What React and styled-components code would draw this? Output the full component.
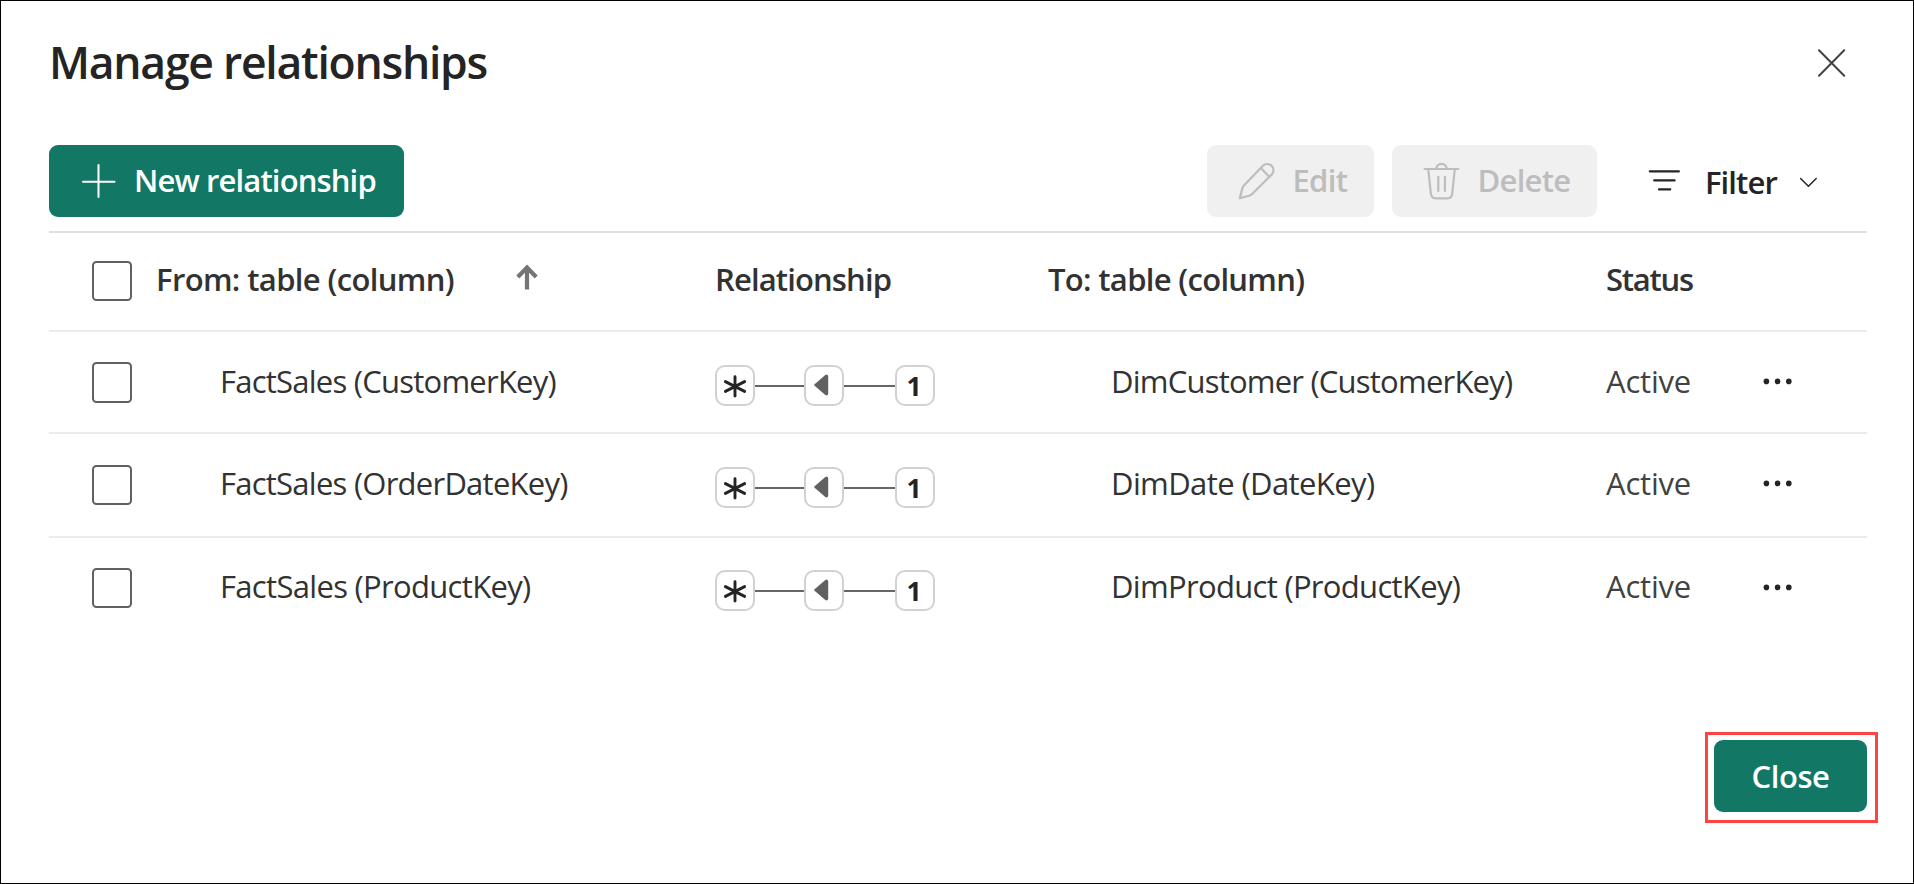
import React from "react";
import styled, { createGlobalStyle } from "styled-components";

const GlobalStyle = createGlobalStyle`
  *, *::before, *::after { box-sizing: border-box; }
  body {
    margin: 0;
    background: #fff;
    font-family: "Segoe UI", "Open Sans", "Noto Sans", sans-serif;
    font-size: 31px;
    color: #323232;
  }
`;

const Dialog = styled.main`
  display: flex;
  flex-direction: column;
  width: 1914px;
  height: 884px;
  padding: 31px 46px 0 48px;
  border: 1px solid #000;
  background: #fff;
`;

const TitleBar = styled.header`
  display: flex;
  justify-content: space-between;
  height: 113px;
  padding-right: 21px;
`;

const Title = styled.h1`
  margin: 0;
  font-size: 44.5px;
  line-height: 60px;
  font-weight: 600;
  letter-spacing: -1.25px;
  color: #242424;
`;

const IconButton = styled.button`
  display: flex;
  align-self: flex-start;
  margin-top: 17px;
  padding: 0;
  border: 0;
  background: none;
  color: #424242;
`;

const Toolbar = styled.div`
  display: flex;
  height: 88px;
  padding-bottom: 14px;
  border-bottom: 2px solid #e0e0e0;
`;

const Actions = styled.div`
  display: flex;
  gap: 18px;
  margin-left: auto;
`;

const variants = {
  primary: { bg: "#127865", fg: "#ffffff" },
  disabled: { bg: "#f0f0f0", fg: "#bdbdbd" },
  subtle: { bg: "transparent", fg: "#242424" },
};

const Button = styled.button`
  display: flex;
  align-items: center;
  flex: none;
  justify-content: ${(p) => (p.$centered ? "center" : "flex-start")};
  width: ${(p) => p.$width}px;
  height: 72px;
  padding: 0 0 0 ${(p) => p.$inset ?? 0}px;
  gap: ${(p) => p.$gap ?? 0}px;
  border: 0;
  border-radius: 9px;
  background: ${(p) => variants[p.$variant].bg};
  color: ${(p) => variants[p.$variant].fg};
  font: inherit;
  font-weight: 600;
`;

const Label = styled.span`
  padding-bottom: ${(p) => p.$lift ?? 2}px;
  white-space: nowrap;
  letter-spacing: ${(p) => p.$spacing}px;
`;

const FilterButton = styled(Button)`
  margin-left: 25px;

  & > ${Label} {
    padding-top: 2px;
  }

  & > svg:last-child {
    margin: 2px 0 0 6px;
  }
`;

const Icon = styled.svg`
  display: block;
  flex: none;
  fill: none;
  stroke: currentColor;
  stroke-linecap: round;
  stroke-linejoin: round;
`;

const Row = styled.div`
  display: grid;
  grid-template-columns: 107px 559px 333px 558px 157px 1fr;
  align-items: start;
  height: ${(p) => p.$height}px;
  border-bottom: ${(p) => (p.$last ? "0" : "2px solid #ebebeb")};
`;

const SelectCell = styled.div`
  padding: ${(p) => p.$top}px 0 0 43px;
`;

const Checkbox = styled.span.attrs({ role: "checkbox", "aria-checked": false })`
  display: block;
  width: 40px;
  height: ${(p) => p.$height ?? 40}px;
  border: 2px solid #616161;
  border-radius: 4.5px;
`;

const HeaderCell = styled.div`
  display: flex;
  padding-top: 26px;
  line-height: 40px;
  font-weight: 600;
  letter-spacing: ${(p) => p.$spacing}px;
  white-space: nowrap;
`;

const SortIcon = styled(Icon)`
  margin: 3px 0 0 61px;
  color: #757575;
  stroke-linecap: butt;
  stroke-linejoin: miter;
`;

const Cell = styled.div`
  padding: ${(p) => p.$top}px 0 0 ${(p) => p.$indent ?? 0}px;
  line-height: 40px;
  letter-spacing: ${(p) => p.$spacing ?? 0}px;
  white-space: nowrap;
  color: ${(p) => (p.$muted ? "#424242" : "#323232")};
`;

const Cardinality = styled.div`
  display: flex;
  align-items: center;
  padding-top: ${(p) => p.$top}px;
`;

const Badge = styled.span`
  display: flex;
  align-items: center;
  justify-content: center;
  width: 40px;
  height: 41px;
  margin-top: ${(p) => (p.$raised ? -1 : 0)}px;
  padding: 0 ${(p) => p.$shift ?? 0}px 0 0;
  border: 2px solid #d1d1d1;
  border-radius: 10px;
  color: #242424;
  font-size: 26.5px;
  font-weight: 700;
  line-height: 36px;
`;

const Link = styled.span`
  width: ${(p) => p.$width}px;
  height: 2px;
  background: #666;
`;

const MenuCell = styled.div`
  display: flex;
  padding-top: ${(p) => p.$top}px;
  color: #242424;
`;

const Footer = styled.footer`
  display: flex;
  justify-content: flex-end;
  margin: 94px -11px 0 0;
`;

const Highlight = styled.div`
  height: 91px;
  padding: 5px 8px 0 6px;
  border: 3px solid #ff4343;
`;

const PlusIcon = () => (
  <Icon width="35" height="36" viewBox="0 0 35 36" strokeWidth="2">
    <path d="M2 18.7H33.5M17.5 2V34" />
  </Icon>
);

const PencilIcon = () => (
  <Icon width="60" height="60" viewBox="0 1 60 60" strokeWidth="2.2">
    <path d="M14.8 48.2L17.3 38.6Q17.8 36.6 19.2 35.2L37.9 15.8A6.2 6.2 0 0 1 46.7 24.6L27.4 43.7Q25.9 45.2 24 45.8ZM35.8 18L44.4 27" />
  </Icon>
);

const TrashIcon = () => (
  <Icon width="60" height="60" viewBox="0 1 60 60" strokeWidth="2.2">
    <path d="M14.6 19H48.4M26.4 19A5.1 5.1 0 0 1 36.6 19M18.2 19L20.9 43.8Q21.5 48.3 25.8 48.3H37.4Q41.6 48.3 42.2 43.8L44.8 19M28.3 26.8V41M34.9 26.8V41" />
  </Icon>
);

const FilterIcon = () => (
  <Icon width="50" height="60" viewBox="0 1 50 60" strokeWidth="2.2">
    <path d="M9.8 21.3H38.9M14.2 30.4H34.6M19 39.4H30.2" />
  </Icon>
);

const ChevronIcon = () => (
  <Icon width="22" height="20" viewBox="0 0 22 20" strokeWidth="1.5">
    <path d="M2.6 6.5L10.4 14.3L18.2 6.5" />
  </Icon>
);

const CrossIcon = () => (
  <Icon width="28" height="28" viewBox="0 0 28 28" strokeWidth="2">
    <path d="M1 1.3L26.2 26.7M26.2 1.3L1 26.7" />
  </Icon>
);

const SortAscendingIcon = () => (
  <SortIcon width="24" height="28" viewBox="0 0 24 28" strokeWidth="4.2">
    <path d="M2.8 15L12 5.6L21.2 15M12 6V27.5" />
  </SortIcon>
);

const AsteriskIcon = () => (
  <Icon width="24" height="24" viewBox="0 0 24 24" strokeWidth="2.9">
    <path d="M12 2.8V22M2.4 7.6L21.6 17.4M21.6 7.6L2.4 17.4" />
  </Icon>
);

const ArrowLeftIcon = () => (
  <Icon width="20" height="24" viewBox="0 0 20 24" strokeWidth="2">
    <path d="M2.2 12L13 2.8Q14.2 2 14.2 3.4V20.6Q14.2 22 13 21.2Z" fill="#616161" stroke="#616161" />
  </Icon>
);

const MoreIcon = () => (
  <Icon width="30" height="8" viewBox="0 0 30 8" strokeWidth="0">
    <g fill="currentColor">
      <circle cx="3.4" cy="4.4" r="2.8" />
      <circle cx="14.6" cy="4.4" r="2.8" />
      <circle cx="25.8" cy="4.4" r="2.8" />
    </g>
  </Icon>
);

const relationships = [
  { from: "FactSales (CustomerKey)", to: "DimCustomer (CustomerKey)", fromSpacing: -0.76, toSpacing: -0.78, height: 102, text: 29, box: 30, boxHeight: 41, link: 33 },
  { from: "FactSales (OrderDateKey)", to: "DimDate (DateKey)", fromSpacing: -0.75, toSpacing: -0.6, height: 104, text: 29, box: 31, boxHeight: 40, link: 33 },
  { from: "FactSales (ProductKey)", to: "DimProduct (ProductKey)", fromSpacing: -0.68, toSpacing: -0.68, height: 100, text: 28, box: 30, boxHeight: 40, link: 32 },
];

function RelationshipRow({ item, last }) {
  return (
    <Row $height={item.height} $last={last}>
      <SelectCell $top={item.box}>
        <Checkbox $height={item.boxHeight} />
      </SelectCell>
      <Cell $top={item.text} $indent={64} $spacing={item.fromSpacing}>{item.from}</Cell>
      <Cardinality $top={item.link}>
        <Badge><AsteriskIcon /></Badge>
        <Link $width={49} />
        <Badge $raised $shift={2}><ArrowLeftIcon /></Badge>
        <Link $width={51} />
        <Badge $shift={2}>1</Badge>
      </Cardinality>
      <Cell $top={item.text} $indent={63} $spacing={item.toSpacing}>{item.to}</Cell>
      <Cell $top={item.text} $spacing={-0.2} $muted>Active</Cell>
      <MenuCell $top={45}><MoreIcon /></MenuCell>
    </Row>
  );
}

export default function App() {
  return (
    <>
      <GlobalStyle />
      <Dialog>
        <TitleBar>
          <Title>Manage relationships</Title>
          <IconButton aria-label="Close dialog">
            <CrossIcon />
          </IconButton>
        </TitleBar>

        <Toolbar>
          <Button $variant="primary" $width={355} $inset={32} $gap={18}>
            <PlusIcon />
            <Label $spacing={-0.86}>New relationship</Label>
          </Button>
          <Actions>
            <Button $variant="disabled" $width={167} $inset={18} $gap={7.5}>
              <PencilIcon />
              <Label $spacing={-0.7}>Edit</Label>
            </Button>
            <Button $variant="disabled" $width={205} $inset={18} $gap={7.5}>
              <TrashIcon />
              <Label $spacing={-0.7}>Delete</Label>
            </Button>
            <FilterButton $variant="subtle" $width={227} $gap={15}>
              <FilterIcon />
              <Label $spacing={-0.9} $lift={0}>Filter</Label>
              <ChevronIcon />
            </FilterButton>
          </Actions>
        </Toolbar>

        <Row $height={99}>
          <SelectCell $top={28}>
            <Checkbox />
          </SelectCell>
          <HeaderCell $spacing={-0.63}>
            From: table (column)
            <SortAscendingIcon />
          </HeaderCell>
          <HeaderCell $spacing={-0.87}>Relationship</HeaderCell>
          <HeaderCell $spacing={-0.68}>To: table (column)</HeaderCell>
          <HeaderCell $spacing={-1.25}>Status</HeaderCell>
        </Row>

        {relationships.map((item, i) => (
          <RelationshipRow key={item.from} item={item} last={i === relationships.length - 1} />
        ))}

        <Footer>
          <Highlight>
            <Button $variant="primary" $width={153} $centered>
              <Label $spacing={-0.4} $lift={0}>Close</Label>
            </Button>
          </Highlight>
        </Footer>
      </Dialog>
    </>
  );
}
